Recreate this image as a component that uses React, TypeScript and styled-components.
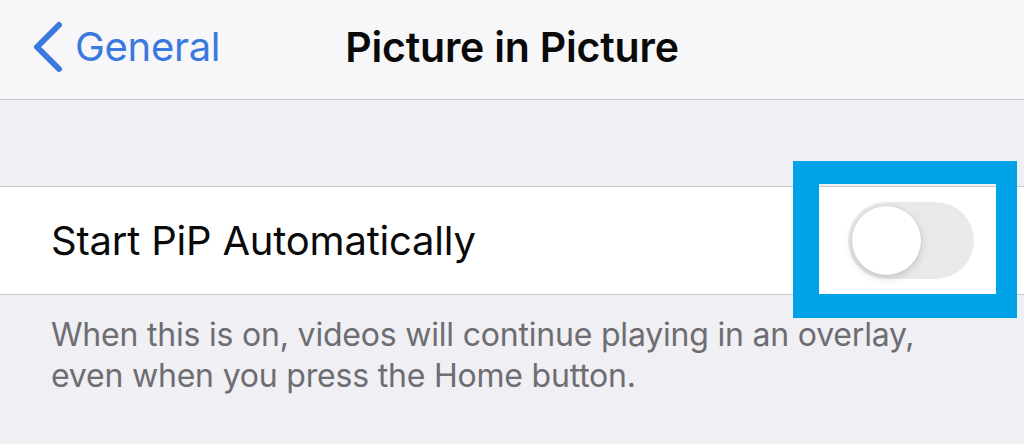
import styled, { createGlobalStyle } from 'styled-components';

const GlobalStyle = createGlobalStyle`
  html, body {
    margin: 0;
    padding: 0;
    background: #efeff4;
  }
  body {
    font-family: Inter, "Noto Sans", "Liberation Sans", sans-serif;
    -webkit-font-smoothing: antialiased;
  }
`;

const Page = styled.div`
  width: 1024px;
  height: 444px;
  overflow: hidden;
  background: #efeff4;
`;

const NavBar = styled.header`
  display: grid;
  grid-template-columns: 1fr auto 1fr;
  align-items: center;
  height: 93px;
  padding-bottom: 6px;
  background: #f7f7f9;
  border-bottom: 1px solid #c8c7cc;
`;

const BackButton = styled.div`
  display: flex;
  align-items: center;
  gap: 11px;
  padding-left: 32px;
  color: #3a79dd;
  font-size: 40px;
  font-weight: 400;
  letter-spacing: -0.3px;
`;

const Title = styled.h1`
  margin: 0;
  font-size: 41px;
  font-weight: 600;
  color: #0a0a0a;
  letter-spacing: -0.2px;
`;

const Gap = styled.div`
  height: 86px;
`;

const Row = styled.div`
  display: flex;
  align-items: center;
  justify-content: space-between;
  height: 107px;
  padding: 0 50px 0 51px;
  background: #ffffff;
  border-top: 1px solid #c8c7cc;
  border-bottom: 1px solid #c8c7cc;
`;

const Label = styled.span`
  font-size: 40px;
  color: #0a0a0a;
  letter-spacing: -0.2px;
`;

const ToggleWrap = styled.div`
  position: relative;
`;

const Highlight = styled.div`
  position: absolute;
  top: -41px;
  left: -55px;
  right: -43px;
  bottom: -39px;
  border-style: solid;
  border-color: #00a2e8;
  border-width: 23px 21px 24px 26px;
  pointer-events: none;
`;

const Track = styled.div<{ $on: boolean }>`
  position: relative;
  width: 126px;
  height: 77px;
  border-radius: 39px;
  background: ${({ $on }) => ($on ? '#34c759' : '#e9e9eb')};
`;

const Knob = styled.div<{ $on: boolean }>`
  position: absolute;
  top: 4px;
  left: ${({ $on }) => ($on ? '53px' : '4px')};
  width: 69px;
  height: 69px;
  border-radius: 50%;
  background: #ffffff;
  box-shadow: 0 3px 8px rgba(0, 0, 0, 0.15), 0 0 0 1px rgba(0, 0, 0, 0.04);
`;

const Footer = styled.p`
  margin: 0;
  padding: 19px 40px 0 51px;
  font-size: 32px;
  line-height: 41px;
  color: #6d6d72;
  letter-spacing: -0.2px;
`;

const Chevron = () => (
  <svg width="32" height="52" viewBox="0 0 32 52" fill="none">
    <path
      d="M27 4 L5 26 L27 48"
      stroke="#3a79dd"
      strokeWidth="6"
      strokeLinecap="round"
      strokeLinejoin="round"
    />
  </svg>
);

const App = () => {
  const on = false;

  return (
    <Page>
      <GlobalStyle />
      <NavBar>
        <BackButton>
          <Chevron />
          General
        </BackButton>
        <Title>Picture in Picture</Title>
        <div />
      </NavBar>
      <Gap />
      <Row>
        <Label>Start PiP Automatically</Label>
        <ToggleWrap>
          <Track $on={on}>
            <Knob $on={on} />
          </Track>
          <Highlight />
        </ToggleWrap>
      </Row>
      <Footer>
        When this is on, videos will continue playing in an overlay,
        <br />
        even when you press the Home button.
      </Footer>
    </Page>
  );
};

export default App;
